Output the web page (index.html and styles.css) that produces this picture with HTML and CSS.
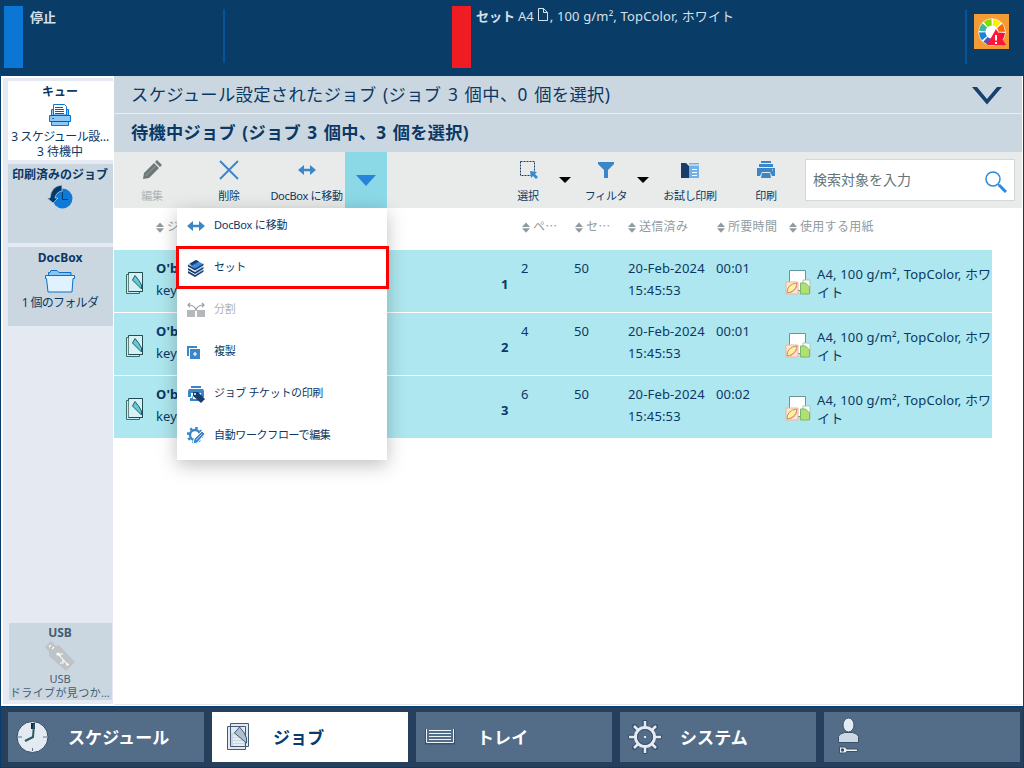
FILE: index.html
```html
<!DOCTYPE html>
<html lang="ja">
<head>
<meta charset="utf-8">
<title>ジョブ</title>
<link rel="stylesheet" href="styles.css">
</head>
<body>
<svg class="defs" width="0" height="0">
  <symbol id="move" viewBox="0 0 18 12"><path d="M0 6l6-5v3.700h6V1l6 5-6 5V7.300H6V11z" fill="#3a86c8"/></symbol>
  <symbol id="sort" viewBox="0 0 8 11"><path d="M0 5L4 .5 8 5zM0 6.300h8l-4 4.500z" fill="#919b9f"/></symbol>
  <symbol id="down" viewBox="0 0 12 6"><path d="M0 0h12L6 6z"/></symbol>
  <symbol id="job" viewBox="0 0 20 24"><path d="M3.500 1.500h14v19h-14z" fill="#d9f1f4" stroke="#234c55"/><path d="M1.500 3.500h13v19h-13z" fill="#fff" fill-opacity=".3" stroke="#3d6d62"/><path d="M4 2h13v18H4z" fill="#d4f1f4"/><path d="M7.500 9l2.500-4.500Q14 9 16.500 14v4z" fill="#62cbd5" stroke="#265965"/><path d="M17.500 1.500v19h-14" fill="none" stroke="#234c55"/></symbol>
  <symbol id="media" viewBox="0 0 26 27"><path d="M4.500 1.500h16v20h-16z" fill="#fff" stroke="#68979b"/><path d="M1 13h12v12H1z" fill="#ffe6ca" stroke="#f2b3a0"/><path d="M2 24Q2 15 12 14Q11 23 2 24z" fill="#fff1a0" stroke="#b89968"/><path d="M5 24Q10 22 12 17" fill="none" stroke="#f28a93"/><path d="M18 11h7v13h-7z" fill="#fff" stroke="#a5c7ad"/><path d="M15.500 14h5l4 4v7h-9z" fill="#b2df70" stroke="#78b96b"/></symbol>
</svg>
<div class="app">
  <header class="top">
    <section class="status"><i class="mark blue"></i><b>停止</b></section>
    <section class="loaded"><i class="mark red"></i><p><b>セット</b> <span>A4</span><svg width="12" height="15" viewBox="0 0 12 15"><path d="M1.500 1.500h5l4 4v8h-9zM6.500 1.500v4h4" fill="none" stroke="#d8e2ea"/></svg><span>, 100 g/m², TopColor, ホワイト</span></p></section>
    <section class="alert"><svg width="35" height="35" viewBox="0 0 35 35"><path fill="#f39c35" d="M0 0h35v35H0z"/><circle cx="18" cy="18" r="13.500" fill="#fff"/><g fill="none" stroke-width="6.500" stroke-dasharray="6.300 55.300"><circle cx="18" cy="18" r="9.800" stroke="#f5122e" stroke-dashoffset="-.7"/><circle cx="18" cy="18" r="9.800" stroke="#5551b8" stroke-dashoffset="-16.100"/><circle cx="18" cy="18" r="9.800" stroke="#1785df" stroke-dashoffset="-23.800"/><circle cx="18" cy="18" r="9.800" stroke="#3eb7a0" stroke-dashoffset="-31.500"/><circle cx="18" cy="18" r="9.800" stroke="#80df00" stroke-dashoffset="-39.200"/><circle cx="18" cy="18" r="9.800" stroke="#ffee00" stroke-dashoffset="-46.900"/><circle cx="18" cy="18" r="9.800" stroke="#ff6500" stroke-dashoffset="-54.600"/></g><path d="M22 15l10 16H13z" fill="#ff1538"/><path d="M22 21v5.500m0 1.500v2" stroke="#fff" stroke-width="2"/></svg></section>
  </header>
  <main class="main">
    <aside class="side">
      <div class="card active"><b>キュー</b>
        <svg width="24" height="24" viewBox="0 0 24 24"><path d="M1.500 12.500h2v-6h17v6h2v6h-21zM3.500 18.500h17v4h-17z" fill="#8ec8f5" stroke="#0876d5"/><path d="M5.500 12V1.500h11l2 2V12z" fill="#fff" stroke="#0876d5"/><path d="M7 4.500h8m-8 2h9m-9 2h9m-9 2h9M2 12.500h20M2 18.500h20" stroke="#0a5cab"/><path d="M4 15h2v1H4z" fill="#0768bd"/></svg>
        <span class="tight">3 スケジュール設…</span><span>3 待機中</span></div>
      <div class="card"><b class="printed">印刷済みのジョブ</b>
        <svg width="26" height="24" viewBox="0 0 26 24"><circle cx="15.500" cy="13.500" r="10" fill="#0e79d7"/><path d="M15.500 7v7.500H21" fill="none" stroke="#063d72"/><path d="M15 0v6Q9 7 8 13h3l-5 5-6-5h3Q4 1 15 0z" fill="#063a69" stroke="#cbd7e0" stroke-width=".7"/></svg></div>
      <div class="card docbox"><b>DocBox</b>
        <svg width="32" height="24" viewBox="0 0 32 24"><path d="M4.500 10V3.500H6l1-2h6l2 2h12V10z" fill="#86c5f5" stroke="#0a70ca"/><path d="M1.500 6.500h29v3h-1.500l-1 13.500H4L2.500 9.500h-1z" fill="#e0f1ff" stroke="#0a70ca"/></svg>
        <span>1 個のフォルダ</span></div>
      <div class="card usb"><b>USB</b>
        <svg width="32" height="31" viewBox="0 0 32 31"><path d="M1 6l6-6 5 5 3-1 16 17-9 9L5 15V11z" fill="#bfc3c5"/><path d="M5 6l2-2m1 4l2-2M14 13l9 10m-7-8v-2h3m0 6v3h-3" fill="none" stroke="#fff" stroke-width="1.100"/><circle cx="14" cy="13" r="1.600" fill="#fff"/><circle cx="23.500" cy="23.500" r="1.200" fill="#fff"/></svg>
        <span>USB</span><span class="drive">ドライブが見つか…</span></div>
    </aside>
    <section class="content">
      <div class="title"><span>スケジュール設定されたジョブ (ジョブ 3 個中、0 個を選択)</span><svg width="30" height="18" viewBox="0 0 30 18"><path d="M0 0h5l10 12L25 0h5L15 17.500z" fill="#16406d"/></svg></div>
      <div class="title bold"><span>待機中ジョブ (ジョブ 3 個中、3 個を選択)</span></div>
      <div class="toolbar">
        <div class="tool off"><svg width="20" height="20" viewBox="0 0 20 20"><path d="M1 19l1-6L12 3l5 5L7 18zM13 2l2-2 5 5-2 2z" fill="#6d7678"/><path d="M3.500 16l10-10M12 3l5 5" stroke="#afb4b5" stroke-width=".7"/></svg><span>編集</span></div>
        <div class="tool"><svg width="20" height="20" viewBox="0 0 20 20"><path d="M1 1l18 18M19 1L1 19" stroke="#3a86c8" stroke-width="1.900"/></svg><span>削除</span></div>
        <div class="tool move"><svg width="18" height="12"><use href="#move"/></svg><span>DocBox に移動</span></div>
        <div class="drop"><svg width="20" height="11"><path d="M0 0h20L10 11z" fill="#2685db"/></svg>
          <div class="menu">
            <div class="item"><svg width="18" height="12"><use href="#move"/></svg><span>DocBox に移動</span></div>
            <div class="item chosen"><svg width="16" height="18" viewBox="0 0 16 18"><path d="M1 5l7-4 7 4-8 5z" fill="#388be0"/><path d="M2 4.500L8 1l3 1.500-7 4z" fill="#173d6d"/><path d="M0 5.500l7 4 8.500-5v1.700L7 11.500l-7-4zM0 9l7 4 8.500-5v1.700L7 15l-7-4zM0 12l7 4 8.500-5v1.700L7 18l-7-4z" fill="#173d6d"/><path d="M8 12l7-4.300M8 15.300l7-4.300" stroke="#69a8df" stroke-width=".9"/></svg><span>セット</span></div>
            <div class="item off"><svg width="18" height="16" viewBox="0 0 18 16"><path d="M0 8h8v7H0zm10 0h8v7h-8z" fill="#b4babc"/><path d="M1 3h2q5 1 6 5 1-4 6-5h2M3 1L1 3l2 2M15 1l2 2-2 2M9 7v2" fill="none" stroke="#9ba1a3" stroke-width="1.200"/></svg><span>分割</span></div>
            <div class="item"><svg class="copy" width="13" height="13" viewBox="0 0 13 13"><path d="M0 0h10v2H2v8H0z" fill="#3a86c8"/><path d="M3 3h10v10H3z" fill="#3a86c8"/><path d="M8 6v4M6 8h4" stroke="#fff" stroke-width="1.200"/></svg><span>複製</span></div>
            <div class="item"><svg width="18" height="18" viewBox="0 0 18 18"><path d="M4 1h10v2H4zM2 4h14l1 2v6h-3V8H4v4H1V6zM3 13h2l1-3v4h7v2H3z" fill="#3a86c8"/><path d="M6 7h5l7 7-4 4-8-7z" fill="#163f70"/><circle cx="8" cy="9" r="1" fill="#fff"/></svg><span>ジョブ チケットの印刷</span></div>
            <div class="item"><svg width="18" height="18" viewBox="0 0 18 18"><circle cx="8" cy="8" r="5" fill="none" stroke="#3a86c8" stroke-width="2.400"/><circle cx="8" cy="8" r="7" fill="none" stroke="#3a86c8" stroke-width="2.500" stroke-dasharray="2.500 3"/><path d="M6 17l1-5L15 4l3 3-8 9z" fill="#3a86c8" stroke="#fff"/><path d="M9 13l6-6" stroke="#fff" stroke-width=".6"/></svg><span>自動ワークフローで編集</span></div>
          </div>
        </div>
        <i></i>
        <div class="tool"><svg width="20" height="20" viewBox="0 0 20 20"><path d="M2.500 1.500h14v14h-14z" fill="none" stroke="#173c65" stroke-dasharray="2 1"/><path d="M12 11l7 1-2 2 3 3-2 2-3-3-2 2z" fill="#348cd1"/></svg><span>選択</span></div>
        <svg class="arrow" width="12" height="6"><use href="#down"/></svg>
        <div class="tool"><svg width="18" height="18" viewBox="0 0 18 18"><path d="M1 1h16v2l-6 6v8H7V9L1 3z" fill="#3a86c8"/></svg><span>フィルタ</span></div>
        <svg class="arrow" width="12" height="6"><use href="#down"/></svg>
        <div class="tool"><svg width="20" height="18" viewBox="0 0 20 18"><path d="M1 2h5l3 3v12H1z" fill="#153e6c"/><path d="M9 2h10v15H9z" fill="#72b0e8"/><path d="M9 4h10" stroke="#f2f6f7"/><path d="M12 8.500h5m-5 3h5m-5 3h5" stroke="#fff"/></svg><span>お試し印刷</span></div>
        <div class="tool"><svg width="20" height="20" viewBox="0 0 20 20"><path d="M5 1h10v2H5zM3 4h14v3H3zM1 8h18v8h-3l-2-4H6l-2 4H1zM6 13h8l1 5H5z" fill="#3a86c8"/><path d="M16 10h1" stroke="#fff"/></svg><span>印刷</span></div>
        <i></i>
        <div class="search"><span>検索対象を入力</span><svg width="22" height="22" viewBox="0 0 22 22"><circle cx="8" cy="8" r="7" fill="none" stroke="#2b89df" stroke-width="1.500"/><path d="M13 13l2 2" stroke="#2b89df" stroke-width="1.500"/><path d="M14 14l7 7" stroke="#2b89df" stroke-width="3"/></svg></div>
      </div>
      <div class="heads">
        <span><svg><use href="#sort"/></svg>ジョブ</span><span><svg><use href="#sort"/></svg>ペ…</span><span><svg><use href="#sort"/></svg>セ…</span><span><svg><use href="#sort"/></svg>送信済み</span><span><svg><use href="#sort"/></svg>所要時間</span><span><svg><use href="#sort"/></svg>使用する用紙</span>
      </div>
      <div class="rows">
        <div class="row"><svg class="job"><use href="#job"/></svg><div class="name"><b>O'brien</b>keyline</div><b class="num">1</b><span>2</span><span>50</span><span>20-Feb-2024<br>15:45:53</span><span>00:01</span><div class="media"><svg><use href="#media"/></svg><p>A4, 100 g/m², TopColor, ホワ<br>イト</p></div></div>
        <div class="row"><svg class="job"><use href="#job"/></svg><div class="name"><b>O'brien</b>keyline</div><b class="num">2</b><span>4</span><span>50</span><span>20-Feb-2024<br>15:45:53</span><span>00:01</span><div class="media"><svg><use href="#media"/></svg><p>A4, 100 g/m², TopColor, ホワ<br>イト</p></div></div>
        <div class="row"><svg class="job"><use href="#job"/></svg><div class="name"><b>O'brien</b>keyline</div><b class="num">3</b><span>6</span><span>50</span><span>20-Feb-2024<br>15:45:53</span><span>00:02</span><div class="media"><svg><use href="#media"/></svg><p>A4, 100 g/m², TopColor, ホワ<br>イト</p></div></div>
      </div>
    </section>
  </main>
  <footer class="nav">
    <div class="tab"><svg width="34" height="34" viewBox="0 0 34 34"><circle cx="16.500" cy="17" r="15.500" fill="#e4eaf2" stroke="#304b69"/><path d="M2 17h4m21 0h4M16.500 28v3" stroke="#60758b"/><path d="M17 3v6" stroke="#142c49" stroke-width="4"/><path d="M18 4l-1 13-8 4" fill="none" stroke="#285b60" stroke-width="2"/></svg><b>スケジュール</b></div>
    <div class="tab on"><svg width="26" height="30" viewBox="0 0 26 30"><path d="M1.500 4.500h18v23h-18zM4.500 1.500h18v23h-18z" fill="#e3e8ef" stroke="#415b79"/><path d="M5 11h14v13H5z" fill="#cbd7e0"/><path d="M7 14h9m-9 3h11M7 20h11M7 23h11" stroke="#fff"/><path d="M8.500 11l5-6q5 5 7 11v5z" fill="#adc1d3" stroke="#415b79"/></svg><b>ジョブ</b></div>
    <div class="tab"><svg width="30" height="18" viewBox="0 0 30 18"><path d="M1 1v14.500h28V1" fill="none" stroke="#38526e" stroke-width="2"/><path d="M1.500 1v13.500h27V1M4 2.500h22M4 5.500h22M4 8.500h22M4 11.500h22" fill="none" stroke="#eef3f7"/></svg><b>トレイ</b></div>
    <div class="tab"><svg width="34" height="34" viewBox="0 0 34 34"><g fill="none" stroke="#38516d" stroke-width="5" stroke-linecap="round"><path d="M17 2v30M2 17h30M6.500 6.500l21 21m0-21l-21 21"/></g><g fill="none" stroke="#e5ebf2" stroke-width="2.500"><path d="M17 1v32M1 17h32M6 6l22 22M28 6L6 28"/></g><circle cx="17" cy="17" r="9.500" fill="#536d88" stroke="#e5ebf2" stroke-width="3"/><circle cx="17" cy="17" r="7.500" fill="none" stroke="#38516d"/><path d="M16 16h2v2h-2z" fill="#e5ebf2"/></svg><b>システム</b></div>
    <div class="tab user"><svg width="24" height="38" viewBox="0 0 24 38"><ellipse cx="11.500" cy="8" rx="5.500" ry="7" fill="#e5ebf2" stroke="#38516d"/><path d="M1.500 25.500v-6q1-3 6-4h8q5 1 6 4v6z" fill="#cbd7e2" stroke="#38516d"/><path d="M2.500 30h6l1 2h11v2.500h-11l-1 1.500h-6z" fill="#edf2f5" stroke="#38516d"/><circle cx="5.500" cy="33" r="1.700" fill="#38516d"/></svg></div>
  </footer>
</div>
</body>
</html>
```
FILE: styles.css
```css
* { box-sizing: border-box; }
body { margin: 0; color: #0b3865; font: 13px/22px "Noto Sans", "Noto Sans CJK JP", sans-serif; }
p { margin: 0; }
svg { display: block; flex: none; }
.defs { position: absolute; }
.app { width: 1024px; height: 768px; display: grid; grid-template-rows: 76px 630px 62px; overflow: hidden; background: #083c6d; }
.top { display: flex; background: #0a3c68; color: #d5e0e9; padding: 6px 15px 0 4px; line-height: 24px; }
.top b { font-size: 13px; }
.top section { display: flex; height: 62px; }
.mark { width: 19px; height: 62px; flex: none; }
.blue { background: #0b76d4; }
.red { background: #ef1c24; }
.status { width: 221px; gap: 7px; line-height: 22px; background: linear-gradient(#07549a, #07549a) right 3px / 2px 54px no-repeat; }
.loaded { width: 515px; margin-left: 227px; gap: 5px; background: linear-gradient(#07549a, #07549a) right 4px / 2px 54px no-repeat; }
.loaded p { display: flex; align-items: flex-start; gap: 3px; line-height: 20px; }
.loaded svg { margin: 1px 0 0; }
.loaded svg + span { letter-spacing: .15px; margin-left: -2px; }
.alert { padding: 8px 0 0 7px; }

.main { display: flex; margin: 0 1px; padding: 0 1px 1px 2px; background: #fff; }
.side { width: 110px; height: 626px; margin-top: 2px; padding: 3px 0 0 5px; background: #e5eaf2; display: flex; flex-direction: column; gap: 4px; }
.card { height: 79px; padding: 1px 1px 0 0; display: flex; flex-direction: column; align-items: center; background: #cbd7e0; font-size: 12px; line-height: 15px; text-align: center; white-space: nowrap; }
.card.active { padding-top: 0; background: #fff; }
.card b { line-height: 21px; }
.card svg { margin: 1px 0 2px; }
.card .tight { letter-spacing: -.5px; }
.card:nth-child(2) { padding-top: 0; }
.card:nth-child(2) svg { margin-top: 0; }
.card.docbox { padding-top: 0; }
.docbox span { letter-spacing: -.7px; }
.card.usb { width: 103px; height: 77px; margin: auto 1px 4px; color: #455c75; font-size: 11px; }
.usb b { font-size: 12px; line-height: 18px; }
.usb svg { margin: -1px 0 0; }
.usb span { line-height: 14px; }
.usb .drive { letter-spacing: .4px; }

.content { flex: 1; margin-left: 1px; min-width: 0; border-bottom: 1px solid #e5e9ed; }
.title { height: 38px; padding: 0 20px 0 17px; display: flex; align-items: center; justify-content: space-between; background: #cbd7e0; border-bottom: 1px solid #e8edf1; font-size: 17.3px; letter-spacing: .35px; word-spacing: 1.6px; white-space: nowrap; }
.title svg { margin-top: 3px; }
.title.bold { font-weight: 700; font-size: 17.200px; letter-spacing: .3px; border: 0; }
.toolbar { height: 56px; display: grid; grid-template-columns: 76px 78px 77px 42px 114px 54px 20px 62px 10px 86px 66px 6px 210px; background: #e9ebea; }
.tool { display: grid; grid-template-rows: 36px 15px; place-items: center; font-size: 11px; line-height: 15px; white-space: nowrap; letter-spacing: -.3px; }
.off { color: #adb3b5; }
.arrow { margin: 25px auto 0; justify-self: center; }
.drop { position: relative; display: grid; place-items: center; background: #8bd9e7; }
.menu { position: absolute; right: 0; top: 56px; z-index: 2; width: 210px; height: 252px; background: #fff; box-shadow: 0 5px 18px rgba(0,0,0,.25); font-size: 11px; letter-spacing: -.35px; }
.item { height: 42px; padding: 0 0 9px 10px; display: flex; align-items: center; gap: 9px; }
.item:first-child { letter-spacing: -.2px; }
.item svg { margin-top: 3px; }
.item .copy { margin-right: 5px; }
.item.chosen { height: 43px; margin: -4px -2px 3px -1px; padding: 0 0 2px 9px; gap: 10px; border: 3px solid #fe0000; }
.search { width: 210px; height: 42px; margin-top: 7px; padding: 0 7px; display: flex; align-items: center; justify-content: space-between; border: 1px solid #d4d8d8; background: #fff; color: #637477; font-size: 14px; }
.search svg { margin-top: 3px; }
.heads { width: 878px; height: 42px; padding-bottom: 6px; display: grid; grid-template-columns: 42px 366px 53px 53px 89px 72px 1fr; align-items: center; color: #919b9f; font-family: "Noto Sans CJK JP", sans-serif; font-size: 12px; letter-spacing: .3px; }
.heads span { display: flex; align-items: center; gap: 3px; white-space: nowrap; }
.heads span:first-child { grid-column: 2; }
.heads svg { width: 8px; height: 11px; margin-top: 3px; }
.rows { display: grid; row-gap: 1px; width: 878px; grid-template-columns: 878px; }
.row { height: 62px; padding-top: 7px; display: grid; grid-template-columns: 42px 345px 20px 53px 54px 88px 70px 206px; background: #aee7ef; white-space: nowrap; letter-spacing: .15px; }
.job { width: 20px; height: 24px; margin: 14px 0 0 11px; }
.name b { display: block; }
.num { align-self: center; margin-bottom: 1px; }
.media { display: flex; gap: 6px; margin: 8px 0 0 -1px; line-height: 18px; }
.media svg { width: 26px; height: 27px; margin-top: 4px; }

.nav { display: grid; grid-template-columns: repeat(5, 196px); gap: 8px; margin: 1px 1px 1px; padding: 5px 2px 4px 7px; background: #263f5c; }
.tab { height: 50px; padding-left: 8px; display: grid; grid-template-columns: 52px 1fr; align-items: center; background: #536d88; color: #fff; font-size: 17px; letter-spacing: .1px; }
.tab b { padding-top: 2px; }
.tab.on { background: #fff; color: #083c6d; padding-left: 14px; grid-template-columns: 47px 1fr; }
.tab:nth-child(3) { padding-left: 9px; }
.tab.user { padding: 0 0 2px 13px; }
```
